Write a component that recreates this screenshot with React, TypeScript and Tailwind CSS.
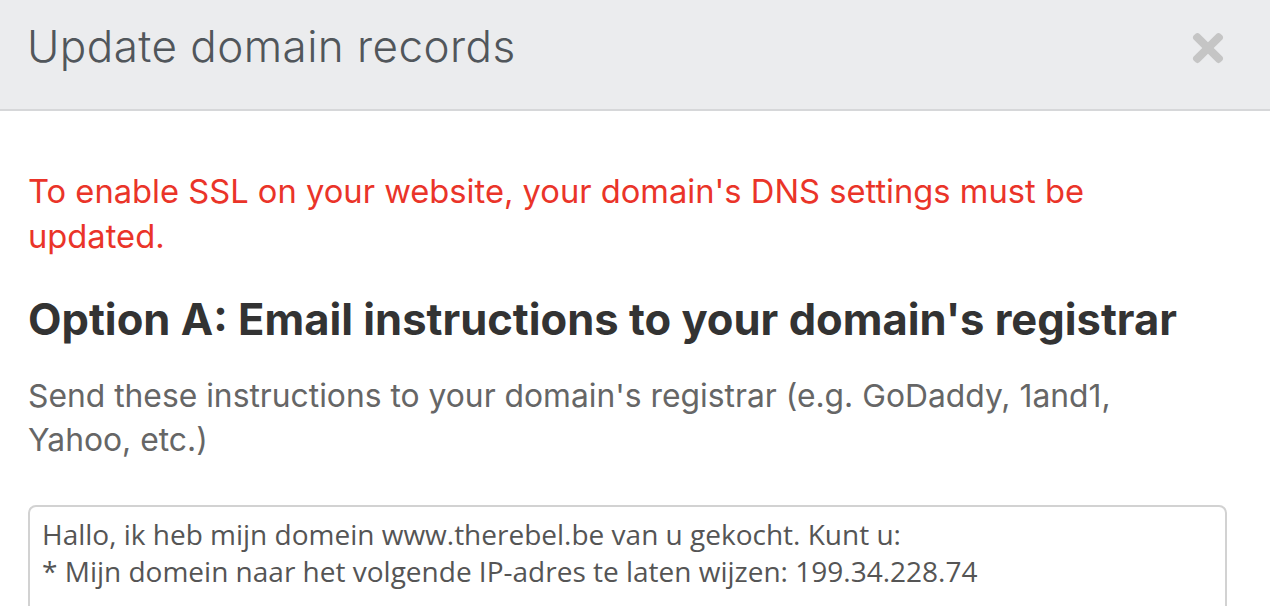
import { FaTimes } from "react-icons/fa";

export default function App() {
  return (
    <div className="min-h-screen w-full bg-white font-['Inter',sans-serif]">
      <header className="flex h-[111px] items-start justify-between border-b-2 border-[#d6d7d9] bg-[#ebecee] pl-[27px] pr-[40px] pt-[24px]">
        <h1 className="text-[44px] font-light leading-[44px] tracking-[0.01em] text-[#51565b]">
          Update domain records
        </h1>
        <button className="mt-[2px] text-[#c5c5c5]" aria-label="Close">
          <FaTimes size={44} />
        </button>
      </header>

      <div className="pl-[28px] pr-[43px] pt-[58px]">
        <p className="max-w-[1120px] text-[32.7px] leading-[45px] text-[#ea3429]">
          To enable SSL on your website, your domain's DNS settings must be updated.
        </p>
        <h2 className="mt-[35px] text-[43.5px] font-bold leading-[50px] text-[#333333]">
          Option A: Email instructions to your domain's registrar
        </h2>
        <p className="mt-[30px] max-w-[1140px] text-[31.8px] leading-[44px] text-[#666666]">
          Send these instructions to your domain's registrar (e.g. GoDaddy, 1and1, Yahoo, etc.)
        </p>
        <textarea
          readOnly
          className="mt-[43px] block h-[200px] w-full resize-none rounded-lg border-2 border-[#d2d2d2] px-[12px] pt-[9px] font-['Open_Sans',sans-serif] text-[28px] leading-[37px] text-[#555555] outline-none"
          value={
            "Hallo, ik heb mijn domein www.therebel.be van u gekocht. Kunt u:\n* Mijn domein naar het volgende IP-adres te laten wijzen: 199.34.228.74"
          }
        />
      </div>
    </div>
  );
}
